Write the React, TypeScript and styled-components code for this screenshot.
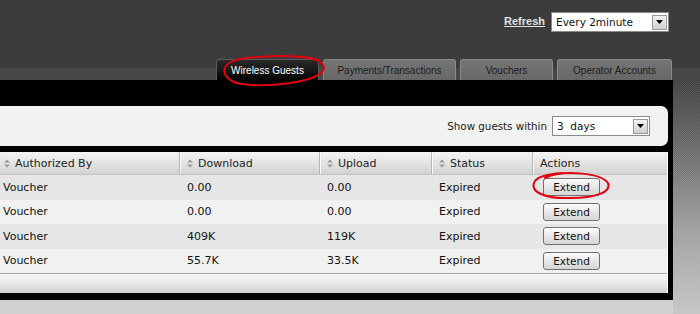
import React from "react";
import styled, { createGlobalStyle } from "styled-components";

const GlobalStyle = createGlobalStyle`
  html, body { margin: 0; padding: 0; background: #3c3c3c; }
  body { font-family: "DejaVu Sans", "Liberation Sans", sans-serif; }
  * { box-sizing: border-box; }
`;

const dither = `repeating-conic-gradient(rgba(255,255,255,0.07) 0 25%, transparent 0 50%) 0 0 / 2px 2px`;

const Page = styled.div`
  position: relative;
  width: 700px;
  height: 314px;
  overflow: hidden;
  background: #3c3c3c;
  display: flex;
  flex-direction: column;
`;

const TopBar = styled.div`
  height: 57px;
  flex: none;
  display: flex;
  justify-content: flex-end;
  align-items: flex-start;
  gap: 6px;
  padding: 12px 31px 0 0;
`;

const RefreshLink = styled.a`
  margin-top: 3px;
  font-family: "Liberation Sans", Arial, sans-serif;
  font-size: 11px;
  font-weight: bold;
  color: #e2e2e2;
  text-decoration: underline;
  cursor: pointer;
`;

const SelectBox = styled.div<{ $w: number; $h: number }>`
  width: ${(p) => p.$w}px;
  height: ${(p) => p.$h}px;
  background: #fff;
  border: 1px solid #8a8a8a;
  display: flex;
  align-items: center;
  padding: 0 1px 0 4px;
  font-family: "DejaVu Sans", sans-serif;
  font-size: 10.5px;
  color: #111;
`;

const SelectText = styled.span`
  flex: 1;
  white-space: pre;
`;

const ArrowBtn = styled.span`
  width: 15px;
  height: 15px;
  background: linear-gradient(#f2f2f2, #d0d0d0);
  border: 1px solid #9a9a9a;
  display: flex;
  align-items: center;
  justify-content: center;
`;

const TabBand = styled.div`
  height: 23px;
  flex: none;
  display: flex;
  justify-content: flex-end;
  align-items: flex-end;
  gap: 4px;
  padding-right: 28px;
  background: linear-gradient(to bottom, #3c3c3c 0 11px, #474747 11px), #3c3c3c;
`;

const Tab = styled.div<{ $w: number; $active?: boolean }>`
  width: ${(p) => p.$w}px;
  height: 21px;
  border-radius: 3px 3px 0 0;
  border: 1px solid ${(p) => (p.$active ? "#5a5a5a" : "#8a8a8a")};
  border-bottom: none;
  background: ${(p) =>
    p.$active ? "linear-gradient(#2a2a2a, #050505)" : "linear-gradient(#757575, #676767)"};
  color: ${(p) => (p.$active ? "#ffffff" : "#1c1c1c")};
  font-family: "Liberation Sans", Arial, sans-serif;
  font-size: 10px;
  display: flex;
  align-items: center;
  justify-content: center;
  padding-top: 1px;
`;

const Body = styled.div`
  flex: 1;
  display: flex;
  min-height: 0;
`;

const LeftCol = styled.div`
  width: 673px;
  flex: none;
  display: flex;
  flex-direction: column;
`;

const Panel = styled.div`
  background: #000;
  padding: 26px 5px 7px 0;
  display: flex;
  flex-direction: column;
  gap: 6px;
`;

const BottomFill = styled.div`
  flex: 1;
  background: ${dither}, #cfcfcf;
`;

const RightStrip = styled.div`
  flex: 1;
  background: repeating-conic-gradient(rgba(255,255,255,0.09) 0 25%, transparent 0 50%) 0 0 / 2px 2px,
    linear-gradient(#3e3e3e, #6a6a6a 30%, #a0a0a0 65%, #c4c4c4);
`;

const FilterBar = styled.div`
  height: 40px;
  background: #f2f2f2;
  border-radius: 0 7px 7px 0;
  display: flex;
  align-items: center;
  justify-content: flex-end;
  gap: 5px;
  padding-right: 18px;
  font-family: "DejaVu Sans", sans-serif;
  font-size: 10.3px;
  color: #1a1a1a;
`;

const Table = styled.div`
  background: #f0f0f0;
  border-right: 1px solid #fff;
  display: flex;
  flex-direction: column;
`;

const cols = "180px 140px 112px 101px 1fr";

const HeadRow = styled.div`
  height: 23px;
  display: grid;
  grid-template-columns: ${cols};
  background: linear-gradient(#f4f4f4, #e4e4e4 50%, #d2d2d2);
  border-bottom: 1px solid #c4c4c4;
`;

const HeadCell = styled.div<{ $first?: boolean; $last?: boolean }>`
  display: flex;
  align-items: center;
  gap: 5px;
  padding-left: ${(p) => (p.$first ? 4 : 7)}px;
  border-right: ${(p) => (p.$last ? "none" : "1px solid #b6b6b6")};
  box-shadow: ${(p) => (p.$last ? "none" : "1px 0 0 #fafafa")};
  font-size: 11px;
  color: #222;
`;

const DataRow = styled.div<{ $alt?: boolean }>`
  height: 24.5px;
  display: grid;
  grid-template-columns: ${cols};
  background: ${(p) => (p.$alt ? "#f1f1f1" : "#e6e6e6")};
  align-items: center;
  font-size: 11px;
  color: #111;
`;

const Cell = styled.div<{ $first?: boolean }>`
  padding-left: ${(p) => (p.$first ? 3 : 7)}px;
  white-space: nowrap;
`;

const ExtendButton = styled.button`
  margin-left: 10px;
  width: 57px;
  height: 18px;
  border: 1px solid #707070;
  border-radius: 3px;
  background: linear-gradient(#fdfdfd, #e6e6e6 50%, #d6d6d6);
  font-family: "DejaVu Sans", sans-serif;
  font-size: 10.5px;
  color: #111;
  padding: 0;
  display: flex;
  align-items: center;
  justify-content: center;
`;

const Footer = styled.div`
  height: 20px;
  border-top: 1px solid #a8a8a8;
  background: linear-gradient(#f6f6f6, #ececec 40%, #cfcfcf);
`;

const Annotations = styled.svg`
  position: absolute;
  left: 0;
  top: 0;
  pointer-events: none;
`;

const SortIcon = () => (
  <svg width="6" height="9" viewBox="0 0 6 9">
    <path d="M0 3.5 L3 0.5 L6 3.5 Z M0 5.5 L3 8.5 L6 5.5 Z" fill="#9a9a9a" />
  </svg>
);

const DownArrow = () => (
  <svg width="7" height="4" viewBox="0 0 7 4">
    <path d="M0 0 L7 0 L3.5 4 Z" fill="#000" />
  </svg>
);

const rows = [
  { by: "Voucher", down: "0.00", up: "0.00", status: "Expired" },
  { by: "Voucher", down: "0.00", up: "0.00", status: "Expired" },
  { by: "Voucher", down: "409K", up: "119K", status: "Expired" },
  { by: "Voucher", down: "55.7K", up: "33.5K", status: "Expired" },
];

const headers = ["Authorized By", "Download", "Upload", "Status"];

export default function App() {
  return (
    <>
      <GlobalStyle />
      <Page>
        <TopBar>
          <RefreshLink>Refresh</RefreshLink>
          <SelectBox $w={118} $h={20}>
            <SelectText>Every 2minute</SelectText>
            <ArrowBtn>
              <DownArrow />
            </ArrowBtn>
          </SelectBox>
        </TopBar>
        <TabBand>
          <Tab $w={103} $active>Wireless Guests</Tab>
          <Tab $w={133}>Payments/Transactions</Tab>
          <Tab $w={93}>Vouchers</Tab>
          <Tab $w={115}>Operator Accounts</Tab>
        </TabBand>
        <Body>
          <LeftCol>
            <Panel>
              <FilterBar>
                <span>Show guests within</span>
                <SelectBox $w={98} $h={20}>
                  <SelectText>3  days</SelectText>
                  <ArrowBtn>
                    <DownArrow />
                  </ArrowBtn>
                </SelectBox>
              </FilterBar>
              <Table>
                <HeadRow>
                  {headers.map((h, i) => (
                    <HeadCell key={h} $first={i === 0}>
                      <SortIcon />
                      {h}
                    </HeadCell>
                  ))}
                  <HeadCell $last>Actions</HeadCell>
                </HeadRow>
                {rows.map((r, i) => (
                  <DataRow key={i} $alt={i % 2 === 1}>
                    <Cell $first>{r.by}</Cell>
                    <Cell>{r.down}</Cell>
                    <Cell>{r.up}</Cell>
                    <Cell>{r.status}</Cell>
                    <div>
                      <ExtendButton>Extend</ExtendButton>
                    </div>
                  </DataRow>
                ))}
                <Footer />
              </Table>
            </Panel>
            <BottomFill />
          </LeftCol>
          <RightStrip />
        </Body>
        <Annotations width="700" height="314" viewBox="0 0 700 314">
          <path
            d="M318 60 C300 54, 242 55, 229 63 C219 70, 226 82, 242 84 C270 88, 312 82, 322 72 C328 65, 320 58, 298 57"
            fill="none"
            stroke="#e3000f"
            strokeWidth="2"
            strokeLinecap="round"
          />
          <path
            d="M545 178 C560 170, 600 172, 608 183 C612 192, 596 198, 570 198 C546 199, 528 192, 535 181 C538 177, 548 174, 562 173"
            fill="none"
            stroke="#e3000f"
            strokeWidth="2"
            strokeLinecap="round"
          />
        </Annotations>
      </Page>
    </>
  );
}
